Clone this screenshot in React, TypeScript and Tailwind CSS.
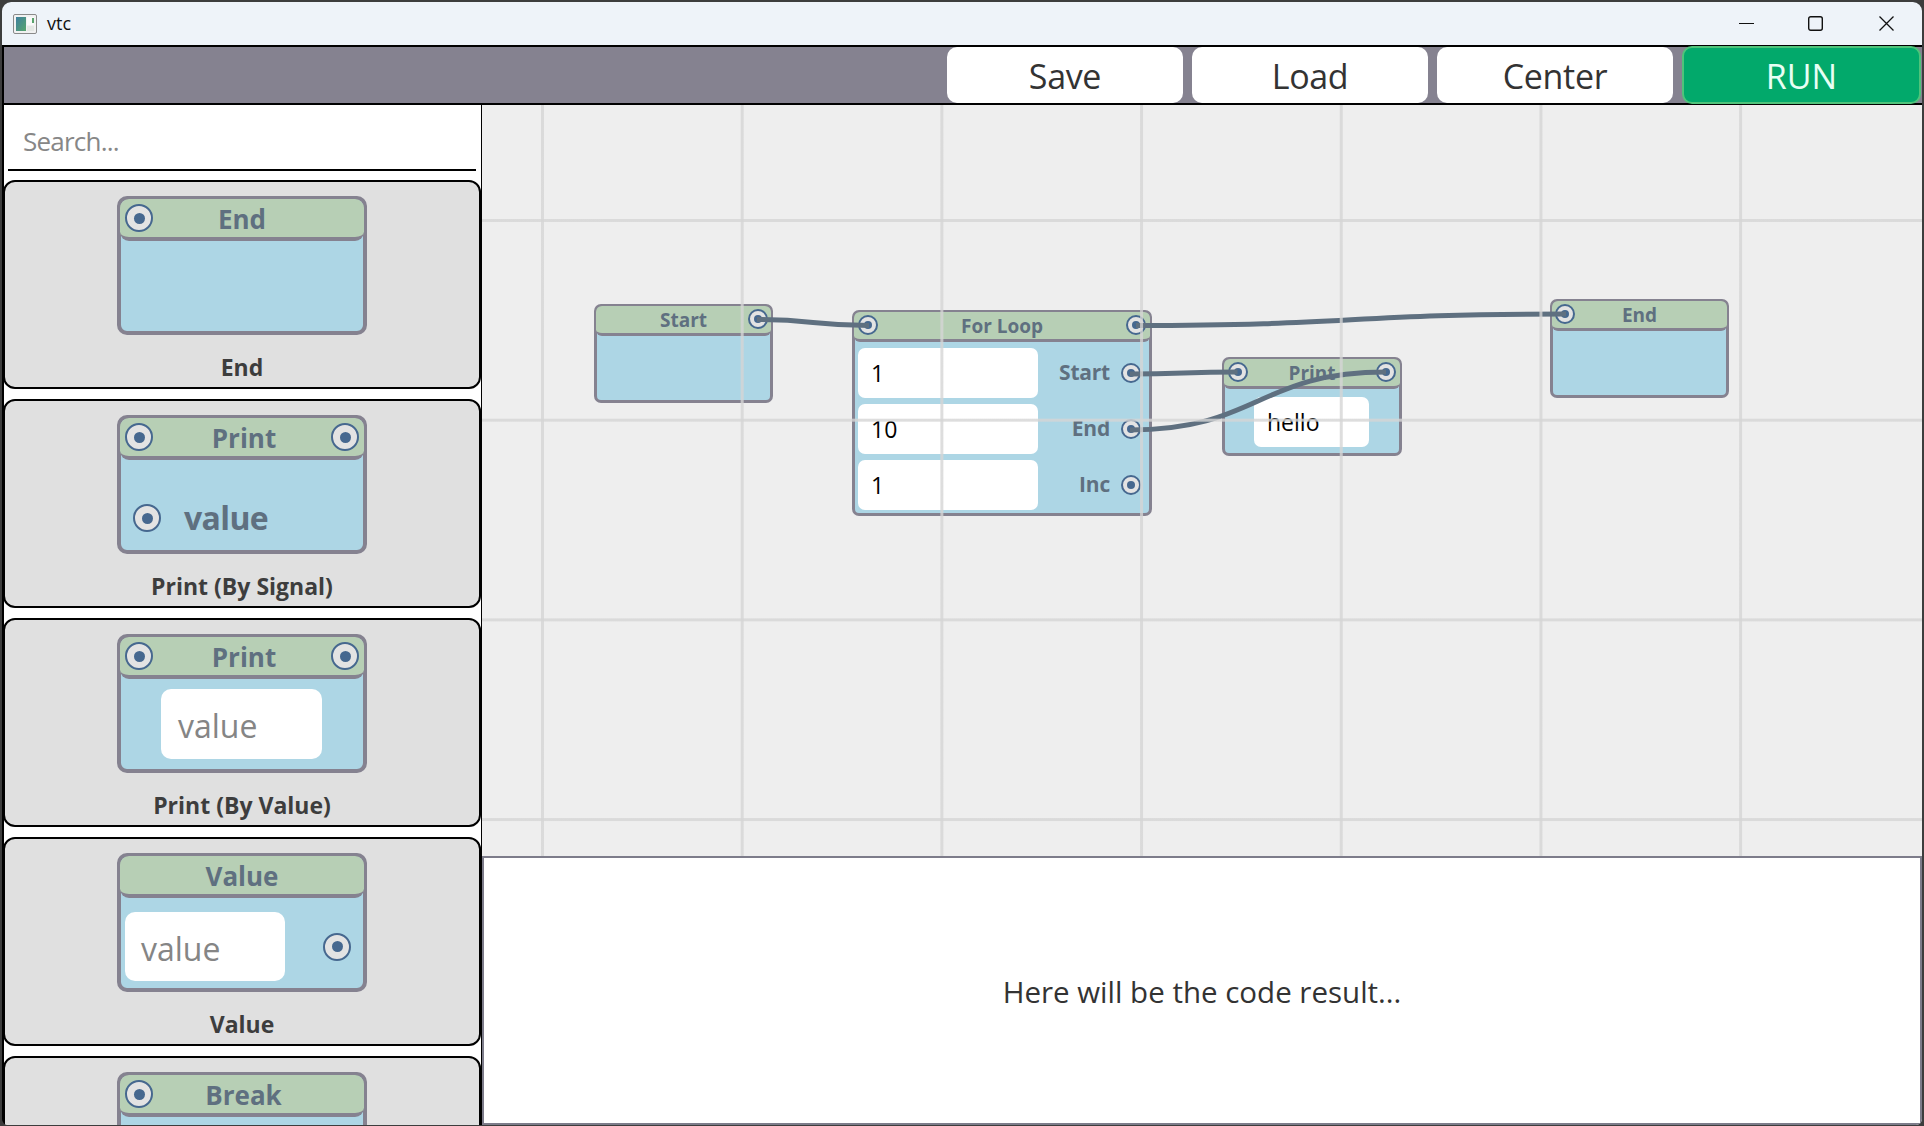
import type { ReactNode } from "react";

const FONT = "font-['Segoe_UI','Open_Sans','Noto_Sans',sans-serif]";

function Port({ big = false, className = "" }: { big?: boolean; className?: string }) {
  return (
    <span
      className={`flex shrink-0 items-center justify-center rounded-full bg-[#e3e3e3] border-[2px] border-[#46688f] ${
        big ? "h-7 w-7" : "h-5 w-5"
      } ${className}`}
    >
      <span className={`rounded-full bg-[#46688f] ${big ? "h-[11px] w-[11px]" : "h-2 w-2"}`} />
    </span>
  );
}

function PaletteNode({
  title,
  left,
  right,
  children,
  shift = "",
}: {
  title: string;
  left?: boolean;
  right?: boolean;
  children?: ReactNode;
  shift?: string;
}) {
  return (
    <div className="relative mx-auto mt-[14px] h-[139px] w-[250px] rounded-[10px] border-[4px] border-[#858290] bg-[#add6e5]">
      <div className="relative -mx-[1px] -mt-[1px] flex h-[42px] items-center justify-center rounded-[9px] border-b-[4px] border-[#858290] bg-[#b7cfb5] pt-[2px] text-[26px] font-bold text-[#5f7080]">
        {left && <Port big className="absolute left-[5px] top-[5px]" />}
        <span className={shift}>{title}</span>
        {right && <Port big className="absolute right-[5px] top-[5px]" />}
      </div>
      {children}
    </div>
  );
}

function PaletteCard({ label, children }: { label?: string; children: ReactNode }) {
  return (
    <div className="h-[209px] shrink-0 rounded-[12px] border-2 border-black bg-[#e0e0e0]">
      {children}
      {label && <div className="mt-[16px] pt-[1px] text-center text-[23px] font-bold leading-[30px] text-[#3d3d3d]">{label}</div>}
    </div>
  );
}

function CanvasInput({ value, className = "" }: { value: string; className?: string }) {
  return (
    <div className={`flex h-[50px] items-center rounded-[7px] bg-white pl-[13px] text-[23px] text-black ${className}`}>
      {value}
    </div>
  );
}

function NodeBox({
  title,
  x,
  y,
  w,
  h,
  children,
}: {
  title: string;
  x: string;
  y: string;
  w: string;
  h: string;
  children?: ReactNode;
}) {
  return (
    <div className={`absolute ${x} ${y} ${w} ${h} rounded-[7px] border-[3px] border-[#858290] bg-[#add6e5]`}>
      <div className="-mx-[1px] -mt-[1px] flex h-[30px] items-center justify-center rounded-[6px] border-b-[3px] border-[#858290] bg-[#b7cfb5] pt-[2px] text-[19px] font-bold text-[#5f7080]">
        {title}
      </div>
      {children}
    </div>
  );
}

export default function App() {
  return (
    <div className={`h-[1126px] w-[1924px] overflow-hidden bg-[#3d3d3d] pb-[1px] pl-[2px] pr-[2px] pt-[2px] ${FONT}`}>
      <div className="flex h-[1123px] flex-col overflow-hidden rounded-b-[6px] rounded-t-[9px] bg-black pl-[2px]">
        {/* Title bar */}
        <div className="-ml-[2px] flex h-[43px] shrink-0 items-center bg-[#eef3f9] pl-[11px]">
          <svg width="24" height="20" viewBox="0 0 24 20">
            <defs>
              <linearGradient id="pane" x1="0" y1="0" x2="1" y2="1">
                <stop offset="0" stopColor="#3f7f9f" />
                <stop offset="1" stopColor="#57a56c" />
              </linearGradient>
            </defs>
            <rect x="0.5" y="0.5" width="23" height="19" rx="1.5" fill="#f1f1f1" stroke="#8a8a8a" />
            <rect x="3" y="3" width="10" height="14" fill="url(#pane)" />
            <rect x="14" y="3" width="7" height="8" fill="#fafafa" />
            <rect x="19" y="4" width="2" height="5" fill="#5aa36d" />
            <rect x="14" y="12" width="7" height="5" fill="#e4e7e4" />
          </svg>
          <span className="ml-[10px] text-[18px] text-[#111]">vtc</span>
          <div className="ml-auto flex items-center">
            <svg width="15" height="15" viewBox="0 0 15 15" className="mr-[54px]">
              <path d="M0 7.5h15" stroke="#111" strokeWidth="1.2" />
            </svg>
            <svg width="15" height="15" viewBox="0 0 15 15" className="mr-[56px]">
              <rect x="0.7" y="0.7" width="13.6" height="13.6" rx="2" fill="none" stroke="#111" strokeWidth="1.4" />
            </svg>
            <svg width="15" height="15" viewBox="0 0 15 15" className="mr-[28px]">
              <path d="M0.5 0.5l14 14M14.5 0.5l-14 14" stroke="#111" strokeWidth="1.3" />
            </svg>
          </div>
        </div>

        {/* Toolbar */}
        <div className="mt-[2px] flex h-[56px] shrink-0 items-stretch justify-end gap-[9px] bg-[#858290] pr-[1px]">
          {["Save", "Load", "Center"].map((label) => (
            <button key={label} className="w-[236px] rounded-[10px] bg-white pt-[2px] text-[34px] leading-none tracking-[-0.01em] text-[#333]">
              {label}
            </button>
          ))}
          <button className="-my-[1px] w-[239px] rounded-[10px] border-2 border-[#4fc37a] bg-[#02a96b] pt-[2px] text-[34px] leading-none text-[#e8fff4]">
            RUN
          </button>
        </div>

        <div className="mt-[2px] flex min-h-0 flex-1">
          {/* Palette */}
          <aside className="flex w-[477px] shrink-0 flex-col overflow-hidden bg-white">
            <div className="ml-[4px] mr-[5px] flex h-[66px] shrink-0 items-center border-b-2 border-black pl-[15px] pt-[9px] text-[26px] tracking-[-0.03em] text-[#878787]">
              Search...
            </div>
            <div className="-ml-[1px] mt-[9px] flex flex-col gap-[10px]">
              <PaletteCard label="End">
                <PaletteNode title="End" left />
              </PaletteCard>
              <PaletteCard label="Print (By Signal)">
                <PaletteNode title="Print" left right shift="ml-[4px]">
                  <div className="flex items-center pl-[12px] pt-[42px]">
                    <Port big />
                    <span className="ml-[23px] text-[32px] font-bold leading-none tracking-[-0.02em] text-[#5f7080]">value</span>
                  </div>
                </PaletteNode>
              </PaletteCard>
              <PaletteCard label="Print (By Value)">
                <PaletteNode title="Print" left right shift="ml-[4px]">
                  <div className="ml-[40px] mr-[41px] mt-[10px] flex h-[70px] items-center rounded-[10px] bg-white pl-[17px] pt-[4px] text-[32px] text-[#858585]">
                    value
                  </div>
                </PaletteNode>
              </PaletteCard>
              <PaletteCard label="Value">
                <PaletteNode title="Value">
                  <div className="flex items-center pl-[4px] pt-[14px]">
                    <div className="flex h-[69px] w-[160px] items-center rounded-[10px] bg-white pl-[16px] pt-[4px] text-[32px] text-[#858585]">
                      value
                    </div>
                    <Port big className="ml-[38px]" />
                  </div>
                </PaletteNode>
              </PaletteCard>
              <PaletteCard>
                <PaletteNode title="Break" left shift="ml-[3px]" />
              </PaletteCard>
            </div>
          </aside>

          <div className="flex min-w-0 flex-1 flex-col pl-[1px]">
            {/* Canvas */}
            <div className="relative h-[751px] shrink-0 overflow-hidden bg-[#eeeeee]">
              <NodeBox title="Start" x="left-[112px]" y="top-[199px]" w="w-[179px]" h="h-[99px]">
                <Port className="absolute right-[2px] top-[2px]" />
              </NodeBox>

              <NodeBox title="For Loop" x="left-[370px]" y="top-[205px]" w="w-[300px]" h="h-[206px]">
                <Port className="absolute left-[3px] top-[2px]" />
                <Port className="absolute right-[3px] top-[2px]" />
                <div className="flex flex-col gap-[6px] pl-[3px] pt-[6px]">
                  {[
                    ["1", "Start"],
                    ["10", "End"],
                    ["1", "Inc"],
                  ].map(([value, label]) => (
                    <div key={label + value} className="flex items-center">
                      <CanvasInput value={value} className="w-[180px]" />
                      <span className="ml-auto mr-[11px] text-[21px] font-bold tracking-[-0.01em] text-[#5f7080]">{label}</span>
                      <Port className="mr-[8px]" />
                    </div>
                  ))}
                </div>
              </NodeBox>

              <NodeBox title="Print" x="left-[740px]" y="top-[252px]" w="w-[180px]" h="h-[99px]">
                <Port className="absolute left-[3px] top-[2px]" />
                <Port className="absolute right-[3px] top-[2px]" />
                <CanvasInput value="hello" className="ml-[29px] mt-[8px] w-[115px] text-[22px]" />
              </NodeBox>

              <NodeBox title="End" x="left-[1068px]" y="top-[194px]" w="w-[179px]" h="h-[99px]">
                <Port className="absolute left-[2px] top-[2px]" />
              </NodeBox>

              {/* Wires */}
              <svg className="pointer-events-none absolute inset-0 h-full w-full" fill="none" stroke="#5f7080" strokeWidth="5">
                <path d="M275 214.500C331 214.500 331 220.500 387 220.500" />
                <path d="M654 220.500C869 220.500 869 209 1084 209" />
                <path d="M648 269C701 269 702 267 755.500 267" />
                <path d="M648 325C776 325 776 267 904 267" />
              </svg>

              {/* Grid, drawn over the nodes */}
              <div className="pointer-events-none absolute inset-0 bg-[linear-gradient(to_right,rgba(213,213,213,0.8)_3px,transparent_3px),linear-gradient(to_bottom,rgba(213,213,213,0.8)_3px,transparent_3px)] bg-[size:199.7px_199.7px] bg-[position:59px_114px]" />
            </div>

            {/* Output */}
            <div className="flex flex-1 items-center justify-center border-2 border-[#7d7c8a] bg-white pt-[3px] text-[29.5px] text-[#333]">
              Here will be the code result...
            </div>
          </div>
        </div>
      </div>
    </div>
  );
}
